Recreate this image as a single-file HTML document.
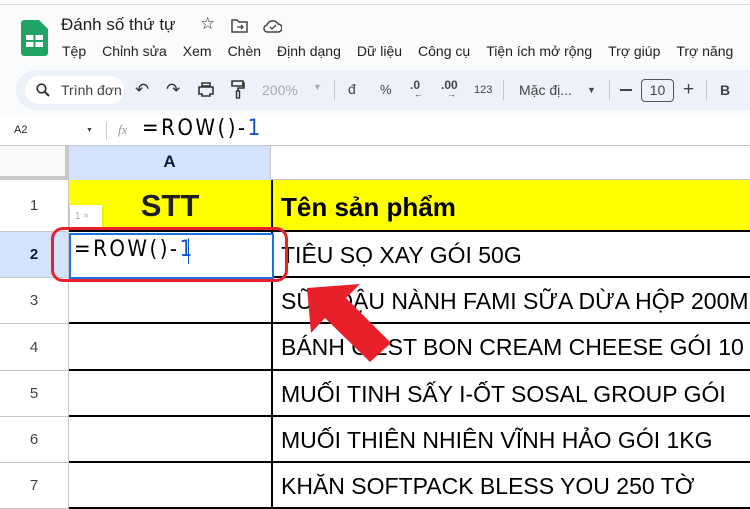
<!DOCTYPE html>
<html><head><meta charset="utf-8"><style>
*{margin:0;padding:0;box-sizing:border-box}
body{width:750px;height:500px;overflow:hidden;background:#f9fbfd;font-family:"Liberation Sans",sans-serif;position:relative;color:#1f1f1f}
.a{position:absolute}
.menu span{margin-right:16px}
.tb{font-size:13px;color:#444}
.rh{position:absolute;left:0;width:69px;text-align:center;font-size:15px;color:#444;background:#fff;border-bottom:1px solid #c7c7c7;border-right:1px solid #c7c7c7}
.cell{position:absolute;left:271px;width:479px;font-size:23px;padding-left:8px;border-bottom:2px solid #000;border-left:2px solid #000;background:#fff;white-space:nowrap;overflow:hidden;color:#000}
.ca{position:absolute;left:69px;width:202px;border-bottom:2px solid #000;background:#fff}
.fm{font-family:'DejaVu Sans Condensed','DejaVu Sans',sans-serif;letter-spacing:2.5px;font-size:22px}
</style></head><body>
<div class="a" style="left:0;top:4px;width:750px;height:1px;background:#ddd"></div>
<svg class="a" style="left:21px;top:20px" width="27" height="36"><path d="M3 0h15l9 9v24a3 3 0 0 1-3 3H3a3 3 0 0 1-3-3V3a3 3 0 0 1 3-3z" fill="#1fa463"/><rect x="5" y="15" width="17" height="12" fill="#fff"/><path d="M5 21h17M13.5 15v12" stroke="#1fa463" stroke-width="2"/></svg>
<div class="a" style="left:61px;top:15px;font-size:17px">Đánh số thứ tự</div>
<div class="a" style="left:200px;top:14px;font-size:17px">☆</div>
<svg class="a" style="left:231px;top:19px" width="17" height="14"><path d="M1 1h5l2 2h8v10H1z" fill="none" stroke="#444" stroke-width="1.5"/><path d="M6 8h6M10 6l2 2-2 2" stroke="#444" stroke-width="1.3" fill="none"/></svg>
<svg class="a" style="left:263px;top:19px" width="19" height="14"><path d="M5 13h10a4 4 0 0 0 0-8 6 6 0 0 0-11 1 3.5 3.5 0 0 0 1 7z" fill="none" stroke="#444" stroke-width="1.5"/><path d="M7 8l2 2 4-4" stroke="#444" stroke-width="1.3" fill="none"/></svg>
<div class="a menu" style="left:62px;top:43px;font-size:14px;white-space:nowrap;word-spacing:0"><span>Tệp</span><span>Chỉnh sửa</span><span>Xem</span><span>Chèn</span><span>Định dạng</span><span>Dữ liệu</span><span>Công cụ</span><span>Tiện ích mở rộng</span><span>Trợ giúp</span><span>Trợ năng</span></div>
<div class="a" style="left:16px;top:70px;width:760px;height:40px;background:#edf2fa;border-radius:20px"></div>
<div class="a" style="left:25px;top:76px;width:99px;height:28px;background:#fff;border-radius:14px"></div>
<svg class="a" style="left:36px;top:83px" width="14" height="14"><circle cx="5.5" cy="5.5" r="4.3" fill="none" stroke="#333" stroke-width="1.7"/><path d="M9 9l4 4" stroke="#333" stroke-width="2"/></svg>
<div class="a tb" style="left:61px;top:82px;font-size:14px">Trình đơn</div>
<div class="a" style="left:124px;top:74px;width:8px;height:34px;background:#edf2fa"></div>
<div class="a tb" style="left:135px;top:80px;font-size:17px;color:#333">↶</div>
<div class="a tb" style="left:166px;top:80px;font-size:17px;color:#333">↷</div>
<svg class="a" style="left:198px;top:82px" width="16" height="15"><path d="M4 1h8v3H4zM1 5h14v7h-3v2H4v-2H1z" fill="none" stroke="#333" stroke-width="1.6"/></svg>
<svg class="a" style="left:231px;top:80px" width="14" height="19"><path d="M1 1h11v5H1zM12 3h1v5H7v3" fill="none" stroke="#333" stroke-width="1.6"/><rect x="5.5" y="11" width="3" height="7" fill="none" stroke="#333" stroke-width="1.4"/></svg>
<div class="a tb" style="left:262px;top:82px;font-size:14px;color:#aaa">200%</div>
<div class="a" style="left:313px;top:82px;font-size:9px;color:#aaa">▼</div>
<div class="a" style="left:334px;top:80px;width:1px;height:20px;background:#c7c7c7"></div>
<div class="a tb" style="left:348px;top:81px;font-size:14px">đ</div>
<div class="a tb" style="left:380px;top:82px">%</div>
<div class="a tb" style="left:410px;top:78px;font-size:12px;font-weight:bold">.0<br><span style="font-size:9px;position:relative;top:-6px;left:4px">←</span></div>
<div class="a tb" style="left:441px;top:78px;font-size:12px;font-weight:bold">.00<br><span style="font-size:9px;position:relative;top:-6px;left:6px">→</span></div>
<div class="a tb" style="left:474px;top:84px;font-size:11px">123</div>
<div class="a" style="left:503px;top:80px;width:1px;height:20px;background:#c7c7c7"></div>
<div class="a tb" style="left:519px;top:82px;font-size:14px">Mặc đị...</div>
<div class="a" style="left:587px;top:85px;font-size:9px;color:#444">▼</div>
<div class="a" style="left:609px;top:80px;width:1px;height:20px;background:#c7c7c7"></div>
<div class="a" style="left:620px;top:89px;width:12px;height:2px;background:#444"></div>
<div class="a" style="left:641px;top:79px;width:33px;height:23px;border:1px solid #555;border-radius:4px;font-size:14px;text-align:center;line-height:21px;color:#444">10</div>
<div class="a tb" style="left:683px;top:79px;font-size:19px">+</div>
<div class="a" style="left:706px;top:80px;width:1px;height:20px;background:#c7c7c7"></div>
<div class="a tb" style="left:720px;top:82px;font-size:14px;font-weight:bold">B</div>
<div class="a" style="left:0;top:116px;width:750px;height:30px;background:#fff"></div>
<div class="a" style="left:14px;top:124px;font-size:11px">A2</div>
<div class="a" style="left:86px;top:127px;font-size:7px;color:#444">▼</div>
<div class="a" style="left:106px;top:122px;width:1px;height:18px;background:#ccc"></div>
<div class="a" style="left:118px;top:122px;font-size:13px;color:#999;font-style:italic;font-family:'Liberation Serif',serif">fx</div>
<div class="a fm" style="left:142px;top:116px;color:#000">=ROW()-<span style="color:#1155cc">1</span></div>
<div class="a" style="left:0;top:145px;width:750px;height:1px;background:#c7c7c7"></div>
<div class="a" style="left:0;top:146px;width:750px;height:354px;background:#fff"></div>
<div class="a" style="left:0;top:146px;width:69px;height:34px;background:#f8f9fa;border-right:4px solid #c7c7c7;border-bottom:4px solid #c7c7c7"></div>
<div class="a" style="left:69px;top:146px;width:202px;height:34px;background:#d3e3fd;border-right:1px solid #c7c7c7;text-align:center;font-size:17px;font-weight:bold;line-height:32px;color:#0b1a3c">A</div>
<div class="a" style="left:271px;top:146px;width:479px;height:34px;background:#fff;border-bottom:1px solid #c7c7c7"></div>
<div class="rh" style="top:180px;height:52px;line-height:52px">1</div>
<div class="rh" style="top:232px;height:46px;line-height:46px;background:#d3e3fd;font-weight:bold;color:#0b1a3c">2</div>
<div class="rh" style="top:278px;height:46px;line-height:46px">3</div>
<div class="rh" style="top:324px;height:47px;line-height:47px">4</div>
<div class="rh" style="top:371px;height:46px;line-height:46px">5</div>
<div class="rh" style="top:417px;height:46px;line-height:46px">6</div>
<div class="rh" style="top:463px;height:46px;line-height:46px">7</div>
<div class="ca" style="top:180px;height:52px;background:#ffff00;text-align:center;font-size:31px;font-weight:bold;line-height:52px">STT</div>
<div class="ca" style="top:232px;height:46px"></div>
<div class="ca" style="top:278px;height:46px"></div>
<div class="ca" style="top:324px;height:47px"></div>
<div class="ca" style="top:371px;height:46px"></div>
<div class="ca" style="top:417px;height:46px"></div>
<div class="ca" style="top:463px;height:46px"></div>
<div class="cell" style="top:180px;height:52px;background:#ffff00;font-weight:bold;font-size:26px;line-height:54px">Tên sản phẩm</div>
<div class="cell" style="top:232px;height:46px;line-height:46px">TIÊU SỌ XAY GÓI 50G</div>
<div class="cell" style="top:278px;height:46px;line-height:46px">SỮA ĐẬU NÀNH FAMI SỮA DỪA HỘP 200ML</div>
<div class="cell" style="top:324px;height:47px;line-height:47px">BÁNH C'EST BON CREAM CHEESE GÓI 10</div>
<div class="cell" style="top:371px;height:46px;line-height:46px">MUỐI TINH SẤY I-ỐT SOSAL GROUP GÓI</div>
<div class="cell" style="top:417px;height:46px;line-height:46px">MUỐI THIÊN NHIÊN VĨNH HẢO GÓI 1KG</div>
<div class="cell" style="top:463px;height:46px;line-height:46px">KHĂN SOFTPACK BLESS YOU 250 TỜ</div>
<div class="a" style="left:69px;top:233px;width:205px;height:46px;border:2px solid #1a73e8;background:#fff"></div>
<div class="a fm" style="left:74px;top:237px;color:#000">=ROW()-<span style="color:#1155cc">1</span></div>
<div class="a" style="left:188px;top:238px;width:1px;height:26px;background:#1155cc"></div>
<div class="a" style="left:70px;top:205px;width:32px;height:23px;background:#fff;box-shadow:0 1px 3px rgba(0,0,0,.25);font-size:10px;color:#aac;line-height:23px;padding-left:5px">1 ×</div>
<div class="a" style="left:51px;top:227px;width:237px;height:55px;border:3px solid #e8202a;border-radius:12px"></div>
<svg class="a" style="left:0;top:0" width="750" height="500"><polygon points="307,288 360,284 346,298 391,343 370,362 325,318 311,333" fill="#e8202a"/></svg>
</body></html>
